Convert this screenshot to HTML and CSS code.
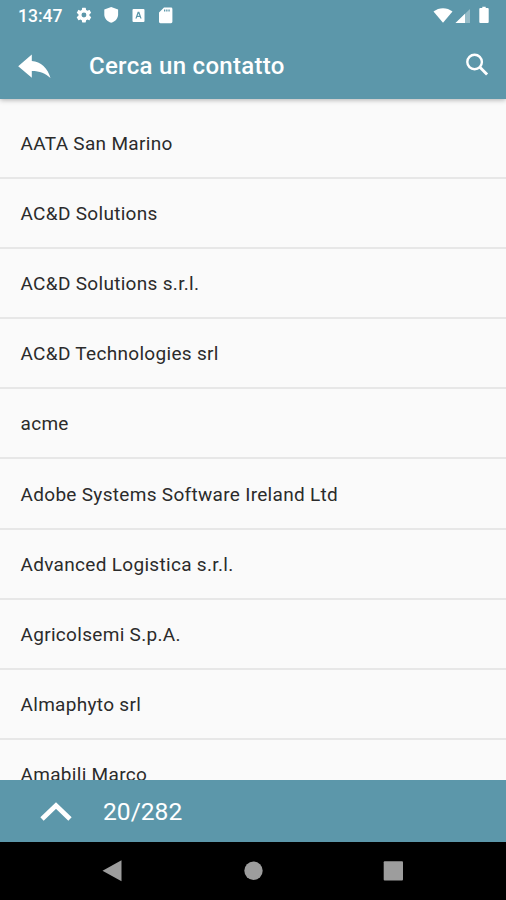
FILE: index.html
```html
<!DOCTYPE html>
<html lang="it">
<head>
<meta charset="utf-8">
<title>Cerca un contatto</title>
<link rel="stylesheet" href="styles.css">
</head>
<body>
<div class="screen">
  <header class="header">
    <div class="status">
      <span class="clock">13:47</span>
      <svg class="status-left" width="98" height="20" viewBox="0 0 98 20" fill="#fff">
        <path transform="translate(-1.300 .8) scale(.77)" d="M19.14 12.94c.04-.3.06-.61.06-.94s-.02-.64-.07-.94l2.03-1.58a.5.5 0 0 0 .12-.61l-1.92-3.32a.5.5 0 0 0-.59-.22l-2.39.96a7 7 0 0 0-1.62-.94l-.36-2.54a.48.48 0 0 0-.48-.41h-3.84a.48.48 0 0 0-.47.41l-.36 2.54a7.400 7.400 0 0 0-1.620.94l-2.390-.96a.49.49 0 0 0-.59.22L2.740 8.870a.48.48 0 0 0 .12.61l2.030 1.580a6 6 0 0 0 0 1.880l-2.030 1.580a.5.5 0 0 0-.12.61l1.920 3.320c.12.22.37.29.59.22l2.390-.96c.5.38 1.030.7 1.620.94l.36 2.540c.05.24.24.41.48.41h3.840c.24 0 .44-.17.47-.41l.36-2.540a7 7 0 0 0 1.620-.94l2.390.96c.22.08.47 0 .59-.22l1.920-3.320a.48.48 0 0 0-.12-.61zM12 15.200a3.200 3.200 0 1 1 0-6.400 3.200 3.200 0 0 1 0 6.400z"/>
        <path d="M35.200 2 28.300 4.600v4.900c0 4 3 7 6.900 8.300 3.900-1.300 6.900-4.300 6.900-8.300V4.600z"/>
        <path fill-rule="evenodd" d="M57.500 4h10a1 1 0 0 1 1 1v11a1 1 0 0 1-1 1h-10a1 1 0 0 1-1-1V5a1 1 0 0 1 1-1zM61.700 6.800 59.400 13.500h1.300l.5-1.600h2.600l.5 1.600h1.300L63.300 6.800zm.8 1.600.9 2.400h-1.800z"/>
        <path fill-rule="evenodd" d="M88 2.600h7a1.400 1.400 0 0 1 1.400 1.400v12.800a1.400 1.400 0 0 1-1.400 1.400H84.400a1.400 1.400 0 0 1-1.400-1.400V7.600zM88 4.600v2h1.300v-2zm2.200 0v2h1.300v-2zm2.200 0v2h1.300v-2z"/>
      </svg>
      <svg class="status-right" width="58" height="20" viewBox="0 0 58 20" fill="#fff">
        <path d="M1.500 6.500c5.500-4.500 13.500-4.500 19 0L11 17.800z"/>
        <path d="M23.500 18 38 4v14z" opacity=".35"/><path d="M23.500 18 33 8.800V18z"/>
        <path d="M48.300 3h2V1.800h3.400V3h2a1 1 0 0 1 1 1v13a1 1 0 0 1-1 1h-7.400a1 1 0 0 1-1-1V4a1 1 0 0 1 1-1z"/>
      </svg>
    </div>
    <div class="toolbar">
      <svg class="back" width="34" height="26" viewBox="0 0 34 26" fill="#fff"><path d="M.2 13.200 13.800 1.500v6.600c9 .8 16 7 18.700 17-5-5-10.700-7.200-18.700-7.200v6.900z"/></svg>
      <h1 class="title">Cerca un contatto</h1>
      <svg class="search" width="24" height="24" viewBox="0 0 24 24" fill="none" stroke="#fff"><circle cx="9.600" cy="9" r="7.300" stroke-width="2.400"/><path d="m14.900 14.300 7.200 7.200" stroke-width="2.900"/></svg>
    </div>
  </header>
  <main class="list">
    <div class="row"><span>AATA San Marino</span></div>
    <div class="row"><span>AC&amp;D Solutions</span></div>
    <div class="row"><span>AC&amp;D Solutions s.r.l.</span></div>
    <div class="row"><span>AC&amp;D Technologies srl</span></div>
    <div class="row"><span>acme</span></div>
    <div class="row"><span>Adobe Systems Software Ireland Ltd</span></div>
    <div class="row"><span>Advanced Logistica s.r.l.</span></div>
    <div class="row"><span>Agricolsemi S.p.A.</span></div>
    <div class="row"><span>Almaphyto srl</span></div>
    <div class="row"><span>Amabili Marco</span></div>
  </main>
  <footer class="counter">
    <svg width="32" height="20" viewBox="0 0 32 20" fill="none" stroke="#fff" stroke-width="4.800"><path d="M2 18 16 4.500l14 13.500"/></svg>
    <span class="count">20/282</span>
  </footer>
  <nav class="nav">
    <svg width="506" height="58" viewBox="0 0 506 58" fill="#9d9d9d"><path d="M102.500 28.700 121.500 18.300v21z"/><circle cx="253.500" cy="28.700" r="9.200"/><rect x="383.700" y="19.300" width="19.300" height="19.300" rx="1"/></svg>
  </nav>
</div>
</body>
</html>
```
FILE: styles.css
```css
* { box-sizing: border-box; }
body { margin: 0; font-family: Roboto, "Liberation Sans", sans-serif; }
svg { display: block; flex: none; }
.screen { width: 506px; height: 900px; display: flex; flex-direction: column; overflow: hidden; background: #fafafa; }
.header { position: relative; height: 99px; flex: none; background: #5c97aa; color: #fff; box-shadow: 0 1px 5px rgba(0, 0, 0, .3); }
.status { height: 32px; display: flex; align-items: center; padding: 0 16px 0 18px; }
.clock { width: 58px; font-size: 17.500px; font-weight: 500; line-height: 32px; }
.status-left { margin-top: -2px; }
.status-right { margin: -2px 0 0 auto; }
.toolbar { height: 67px; display: flex; align-items: center; padding: 0 17px 0 18px; }
.title { margin: 0 auto 0 37px; font-size: 24px; font-weight: 500; line-height: 32px; letter-spacing: .3px; }
.search { margin-top: -1px; }
.list { flex: 1; min-height: 0; overflow: hidden; padding-top: 9.500px; }
.row { height: 70.200px; display: flex; align-items: center; padding: 1px 0 0 20.500px; border-bottom: 2px solid #e7e7e7; font-size: 19px; letter-spacing: .31px; color: #2b2b2b; white-space: nowrap; }
.counter { height: 62px; flex: none; display: flex; align-items: center; padding-left: 40px; background: #5c97aa; color: #fff; }
.count { margin-left: 31px; font-size: 24.600px; }
.nav { height: 58px; flex: none; background: #000; }
```
